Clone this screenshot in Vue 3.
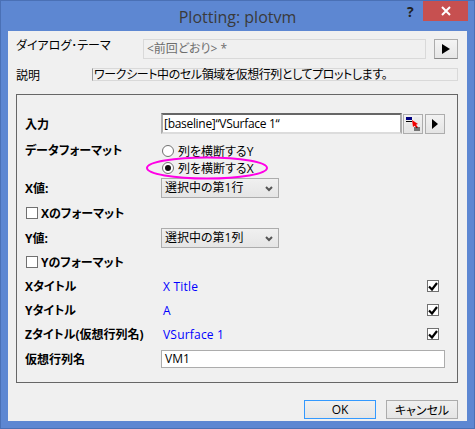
<template>
  <div class="window">
    <header class="titlebar">
      <span class="title">Plotting: plotvm</span>
      <span class="help">?</span>
      <button class="close" type="button" aria-label="閉じる">
        <svg width="10" height="10" viewBox="0 0 10 10"><path d="M1 1l8 8M9 1l-8 8" stroke="#fff" stroke-width="2" /></svg>
      </button>
    </header>

    <main class="client">
      <div class="theme-row">
        <label class="theme-label">ダイアログ･テーマ</label>
        <div class="theme-input">&lt;前回どおり&gt; *</div>
        <button class="theme-arrow" type="button">
          <svg width="8" height="10" viewBox="0 0 8 10"><path d="M0 0l8 5-8 5z" fill="#000" /></svg>
        </button>
      </div>

      <div class="desc-row">
        <span class="desc-label">説明</span>
        <div class="desc-box">ワークシート中のセル領域を仮想行列としてプロットします。</div>
      </div>

      <section class="panel">
        <div class="row input-row">
          <span class="label">入力</span>
          <div class="range-input">[baseline]“VSurface 1“</div>
          <button class="mini first" type="button">
            <svg width="14" height="14" viewBox="0 0 14 14">
              <rect x="0" y="0" width="6" height="3" fill="#000080" />
              <rect x="0" y="4" width="6" height="1" fill="#000" />
              <path d="M0 7h6M0 9h6M0 11h6M8 1h6M8 3h6M8 5h6" stroke="#e4e4e4" stroke-width="1" />
              <path d="M6 3l6 4-2 .8 2 2.4-1.4 1-2-2.4L7 10z" fill="#f00000" />
              <path d="M8 11h6M8 13h6" stroke="#000" stroke-width="1" />
            </svg>
          </button>
          <button class="mini" type="button">
            <svg width="6" height="10" viewBox="0 0 6 10"><path d="M0 0l6 5-6 5z" fill="#000" /></svg>
          </button>
        </div>

        <div class="row format-row">
          <span class="label">データフォーマット</span>
          <div class="radios">
            <label class="radio-line" v-for="opt in formats" :key="opt">
              <span class="radio" :class="{ on: opt === format }"></span>
              {{ opt }}
            </label>
          </div>
        </div>

        <div class="row select-row x-select">
          <span class="label">X値:</span>
          <div class="select">
            選択中の第1行
            <svg class="chev" width="8" height="6" viewBox="0 0 8 6"><path d="M1 1l3 3 3-3" fill="none" stroke="#555" stroke-width="2" /></svg>
          </div>
        </div>

        <div class="row check-row">
          <span class="box"></span>
          <span class="label">Xのフォーマット</span>
        </div>

        <div class="row select-row">
          <span class="label">Y値:</span>
          <div class="select">
            選択中の第1列
            <svg class="chev" width="8" height="6" viewBox="0 0 8 6"><path d="M1 1l3 3 3-3" fill="none" stroke="#555" stroke-width="2" /></svg>
          </div>
        </div>

        <div class="row check-row tight">
          <span class="box"></span>
          <span class="label">Yのフォーマット</span>
        </div>

        <div class="row title-row" v-for="t in titles" :key="t.label">
          <span class="label">{{ t.label }}</span>
          <span class="value">{{ t.value }}</span>
          <span class="box checked">
            <svg width="10" height="9" viewBox="0 0 10 9"><path d="M1 4.5l3 3 5-6.5" fill="none" stroke="#000" stroke-width="2.2" /></svg>
          </span>
        </div>

        <div class="row name-row">
          <span class="label">仮想行列名</span>
          <div class="name-input">VM1</div>
        </div>

        <svg class="circle" width="124" height="24" viewBox="0 0 124 24">
          <ellipse cx="62" cy="12" rx="60" ry="10.5" fill="none" stroke="#ff00e6" stroke-width="2" />
        </svg>
      </section>

      <footer class="buttons">
        <button class="btn default" type="button">OK</button>
        <button class="btn" type="button">キャンセル</button>
      </footer>
    </main>
  </div>
</template>

<script setup>
import { ref } from 'vue'

const formats = ['列を横断するY', '列を横断するX']
const format = ref('列を横断するX')

const titles = [
  { label: 'Xタイトル', value: 'X Title' },
  { label: 'Yタイトル', value: 'A' },
  { label: 'Zタイトル(仮想行列名)', value: 'VSurface 1' }
]
</script>

<style>
html,
body {
  margin: 0;
  background: #5d87d2;
}
</style>

<style scoped>
.window {
  box-sizing: border-box;
  width: 475px;
  height: 429px;
  padding: 0 7px 7px;
  background: #5d87d2;
  border: 1px solid #4a70b5;
  font-family: "Open Sans", "Noto Sans CJK JP", sans-serif;
  font-size: 12px;
  font-feature-settings: "palt";
  color: #000;
  display: flex;
  flex-direction: column;
}

.titlebar {
  height: 30px;
  flex: none;
  position: relative;
  display: flex;
  justify-content: center;
  align-items: center;
}

.title {
  font-size: 16px;
  color: #3a3a3a;
  padding-top: 2px;
}

.help {
  position: absolute;
  left: 399px;
  top: 1px;
  font-size: 14px;
  font-weight: 700;
  color: #222;
}

.close {
  position: absolute;
  left: 415px;
  top: 0;
  width: 45px;
  height: 20px;
  padding: 0;
  border: 0;
  background: #c75050;
  display: flex;
  align-items: center;
  justify-content: center;
}

.client {
  flex: 1;
  background: #f0f0f0;
  padding: 8px 9px 2px 8px;
  display: flex;
  flex-direction: column;
  min-height: 0;
}

.theme-row {
  display: flex;
  align-items: center;
  height: 20px;
}

.theme-label {
  width: 127px;
  flex: none;
  margin-top: -8px;
}

.theme-input {
  box-sizing: border-box;
  width: 283px;
  height: 20px;
  line-height: 18px;
  padding-left: 3px;
  border: 1px solid #d9d9d9;
  color: #6d6d6d;
}

.theme-arrow {
  margin-left: 8px;
  width: 24px;
  height: 20px;
  padding: 0;
  border: 1px solid #acacac;
  border-bottom-color: #888;
  background: linear-gradient(#f4f4f4, #e6e6e6);
  display: flex;
  align-items: center;
  justify-content: center;
}

.desc-row {
  display: flex;
  align-items: center;
  height: 13px;
  margin-top: 9px;
}

.desc-label {
  width: 76px;
  flex: none;
}

.desc-box {
  box-sizing: border-box;
  width: 366px;
  height: 13px;
  line-height: 11px;
  white-space: nowrap;
  letter-spacing: -0.4px;
  border: 1px solid #d9d9d9;
  border-left-color: #9a9a9a;
  padding-left: 1px;
}

.panel {
  position: relative;
  box-sizing: border-box;
  width: 442px;
  height: 289px;
  margin-top: 13px;
  padding: 18px 12px 0 8px;
  border: 1px solid #666;
  display: flex;
  flex-direction: column;
  gap: 6px;
}

.row {
  display: flex;
  align-items: center;
  height: 18px;
  flex: none;
}

.label {
  font-weight: 700;
  white-space: nowrap;
}

.row > .label:first-child {
  width: 136px;
  flex: none;
}

.input-row {
  height: 21px;
}

.range-input {
  box-sizing: border-box;
  width: 242px;
  height: 21px;
  line-height: 17px;
  padding-left: 1px;
  letter-spacing: -0.3px;
  background: #fff;
  border: 2px solid #acacac;
  border-top-color: #666;
  border-bottom-color: #dcdcdc;
  white-space: nowrap;
}

.mini {
  width: 20px;
  height: 20px;
  padding: 0;
  margin-left: 2px;
  border: 1px solid #adadad;
  background: linear-gradient(#f2f2f2, #e4e4e4);
  display: flex;
  align-items: center;
  justify-content: center;
}

.mini.first {
  margin-left: 1px;
}

.format-row {
  height: 34px;
  margin-top: 2px;
  align-items: flex-start;
}

.format-row > .label {
  line-height: 17px;
}

.radios {
  display: flex;
  flex-direction: column;
}

.radio-line {
  height: 17px;
  display: flex;
  align-items: center;
  gap: 4px;
}

.radio {
  box-sizing: border-box;
  width: 12px;
  height: 12px;
  margin-left: 1px;
  border-radius: 50%;
  border: 1px solid #707070;
  background: #fff;
  position: relative;
}

.radio.on::after {
  content: "";
  position: absolute;
  left: 2px;
  top: 2px;
  width: 6px;
  height: 6px;
  border-radius: 50%;
  background: #111;
}

.select-row {
  height: 20px;
}

.x-select {
  margin-top: -4px;
}

.select {
  box-sizing: border-box;
  width: 118px;
  height: 20px;
  line-height: 18px;
  padding-left: 3px;
  border: 1px solid #acacac;
  background: linear-gradient(#f0f0f0, #e5e5e5);
  position: relative;
}

.chev {
  position: absolute;
  right: 5px;
  top: 7px;
}

.check-row {
  gap: 3px;
}

.tight {
  margin-top: -1px;
}

.box {
  box-sizing: border-box;
  width: 12px;
  height: 12px;
  flex: none;
  margin-left: 1px;
  border: 1px solid #707070;
  background: #fff;
  display: flex;
  align-items: center;
  justify-content: center;
}

.value {
  width: 265px;
  flex: none;
  padding-left: 2px;
  box-sizing: border-box;
  color: #0000ff;
  letter-spacing: 0.2px;
}

.name-row {
  margin-top: 1px;
}

.name-input {
  box-sizing: border-box;
  width: 286px;
  height: 18px;
  line-height: 16px;
  padding-left: 3px;
  background: #fff;
  border: 1px solid #acacac;
}

.circle {
  position: absolute;
  left: 128px;
  top: 61px;
}

.buttons {
  display: flex;
  justify-content: flex-end;
  gap: 10px;
  margin-top: 17px;
  width: 442px;
}

.btn {
  width: 72px;
  height: 19px;
  padding: 0;
  font: inherit;
  font-feature-settings: "palt";
  color: #000;
  border: 1px solid #acacac;
  background: linear-gradient(#f0f0f0, #e5e5e5);
}

.btn.default {
  border-color: #3399ff;
}
</style>
